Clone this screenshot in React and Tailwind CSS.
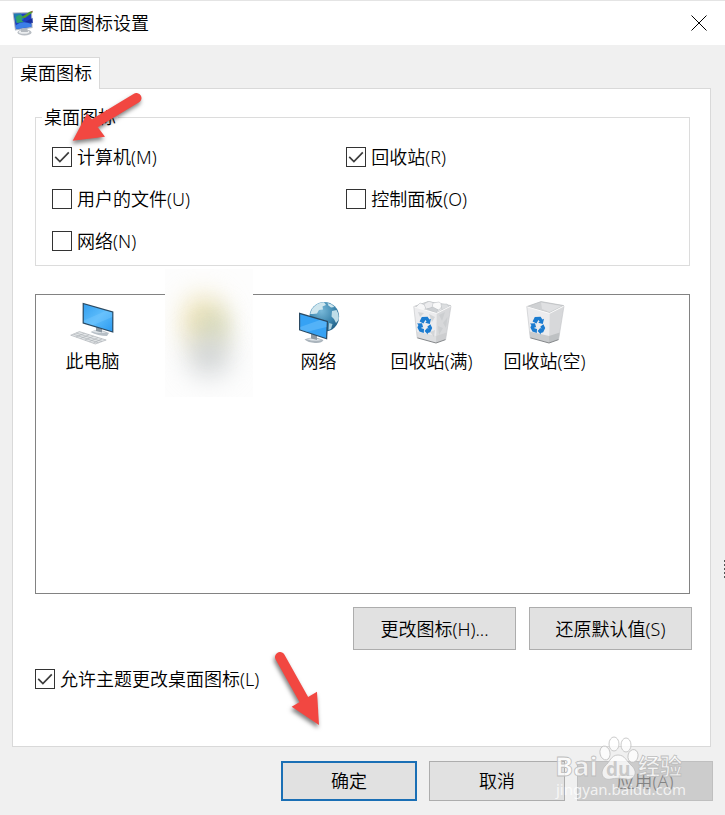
import React from 'react';
import clsx from 'clsx';

const FONT = "font-['Noto_Sans','Noto_Sans_CJK_SC',sans-serif]";

function ThemeIcon() {
  return (
    <svg className="w-[22px] h-[26px] shrink-0" viewBox="0 0 22 26" aria-hidden="true">
      <ellipse cx="12.5" cy="22.4" rx="7" ry="3" fill="#b9bec4" />
      <ellipse cx="12" cy="22" rx="5.4" ry="1.8" fill="#eceef0" />
      <path d="M9 18 L15 17 L16 22 L9 22 Z" fill="#b4b9bf" />
      <path d="M0.6 2.6 L20 2 L20.6 18 L3 20.6 Z" fill="#a9b4c4" />
      <path d="M1.8 3.8 L19 3.2 L19.4 16.8 L4 19 Z" fill="#1d3fc0" />
      <path d="M1.8 3.8 L9 3.5 L12 9 L4 13 Z" fill="#1f7fb0" />
      <path d="M4 7 Q8 3 11 7 Q8 10 12 12 L5 13 Z" fill="#2fa36b" />
      <path d="M3.6 15.5 Q10 10 19.4 14 L19.4 16.8 L4 19 Z" fill="#3c7fe8" />
      <path d="M13 12 L20.5 8 L20.8 13 Z" fill="#1a2f9c" />
      <path d="M9 7.5 L18 1.6 L20.5 2.4 L13 8 Z" fill="#4f9d2c" />
      <path d="M18 1.6 L20.8 0.8 L20.5 2.8 Z" fill="#8a6a3c" />
    </svg>
  );
}

function ComputerIcon() {
  return (
    <svg className="w-12 h-11" viewBox="0 0 48 44" aria-hidden="true">
      <defs>
        <linearGradient id="pc-screen" x1="0" y1="0" x2="1" y2="1">
          <stop offset="0" stopColor="#35a0f0" />
          <stop offset="0.5" stopColor="#5cbcfb" />
          <stop offset="1" stopColor="#2c9bf2" />
        </linearGradient>
      </defs>
      <path d="M21.5 31 Q29 26.5 40 32 L38 35 Q29 35 21.5 31 Z" fill="#b7bfc6" />
      <path d="M23 30.5 Q29 28 37 31.5 Q30 33 23 30.5 Z" fill="#dfe4e8" />
      <path d="M27 26 L33 28 L33 31.5 L27 30 Z" fill="#8f9aa3" />
      <path d="M13.6 1.7 L44.4 10.6 L44.4 31.8 L13.6 22.4 Z" fill="#2b4a63" />
      <path d="M14.8 3.3 L43.2 11.5 L43.2 30.2 L14.8 21.5 Z" fill="url(#pc-screen)" />
      <path d="M14.8 19.5 L37 9.7 L43.2 11.5 L43.2 16 L24 24.3 L14.8 21.5 Z" fill="#7fcbff" opacity="0.35" />
      <path d="M1.7 34.2 L10.4 30.6 L37.2 39 L26.4 43 Z" fill="#e2e5e7" stroke="#a6abb0" strokeWidth="0.6" />
      <path d="M4.5 33.2 L29.5 41.8 M7.2 32 L33 40.5 M7 36 L15.5 32.3 M11.5 37.5 L20 33.8 M16 39 L24.5 35.2 M20.5 40.6 L29 36.6 M24.5 41.9 L33 37.9" stroke="#a9aeb3" strokeWidth="0.6" />
    </svg>
  );
}

function NetworkIcon() {
  return (
    <svg className="w-12 h-11" viewBox="0 0 48 44" aria-hidden="true">
      <defs>
        <radialGradient id="net-globe" cx="0.4" cy="0.3" r="0.75">
          <stop offset="0" stopColor="#79b9d9" />
          <stop offset="0.6" stopColor="#3d86ae" />
          <stop offset="1" stopColor="#1f5c83" />
        </radialGradient>
      </defs>
      <circle cx="29.3" cy="15.7" r="14.8" fill="url(#net-globe)" />
      <path d="M17 8 Q22 1.5 29 1.2 L31 4 L27.5 5.5 L28 8.5 L24 9 L22 12.5 L18 13 L15.2 13 Z" fill="#cfe6ee" />
      <path d="M32.5 2 Q37 3 39.5 6 L36 6.5 L33.5 4.5 Z" fill="#cfe6ee" />
      <path d="M37 10 L41.5 9 Q44.5 14 43.5 19 L41 22 L39 18 L36.5 15.5 Z" fill="#bfdde8" />
      <path d="M34 22 L37.5 23 L36 28 L33.5 29 Z" fill="#a8cfdf" />
      <path d="M9.5 38.5 Q18 34.5 28.5 39 Q27 42.4 20 42 Q13 41.5 9.5 38.5 Z" fill="#aab4bc" />
      <path d="M11 37.9 Q18 36 27 39 Q20 41 11 37.9 Z" fill="#dfe5e9" />
      <path d="M16 32 L22 34 L22 39 L16 37.5 Z" fill="#8f9aa3" />
      <path d="M4 11.5 L33 20 L32.2 38.6 L4 29.3 Z" fill="#2b4a63" />
      <path d="M5.2 13.2 L31.7 21 L31 37 L5.2 28.4 Z" fill="#36a2f4" />
      <path d="M5.2 26 L25 19 L31.7 21 L31.5 26 L12 30.7 L5.2 28.4 Z" fill="#7fcbff" opacity="0.4" />
    </svg>
  );
}

function RecycleMark() {
  return (
    <g fill="#1c7cd0">
      <path d="M11.6 20.6 L13.8 16 L19.6 15.8 L21.4 18.4 L23 17.8 L21.8 23 L17.2 21.8 L18.6 20.4 L17.4 19 L15.4 22.6 Z" />
      <path d="M9 22.4 L14 22.2 L15.2 26.4 L13.8 26 L13.4 27.2 L16 28 L15.8 32 L11.4 30.6 L9.4 26.6 L10.4 24 Z" />
      <path d="M16.6 30 L19.6 26.4 L19.8 27.8 L20.4 27.8 L19.4 25.4 L22.4 23.2 L24.2 27 L22.2 31.2 L19.8 32 L19.8 33.4 Z" />
    </g>
  );
}

function BinIcon({ full }) {
  return (
    <svg className="w-12 h-11" viewBox="0 0 48 44" aria-hidden="true">
      <path d="M5.8 5.6 L20 0.6 L43 4.6 L28.5 12 Z" fill={full ? '#e3e4e6' : '#cfd1d3'} stroke="#b8babd" strokeWidth="0.7" />
      {full ? (
        <g stroke="#b9bcc0" strokeWidth="0.5">
          <path d="M8 6 L12 2 L17 4 L18 8 L12 9 Z" fill="#f7f7f8" />
          <path d="M16 3 L21 0.3 L26 2 L24 7 L18 8 Z" fill="#ececee" />
          <path d="M25 2 L31 1 L35 4 L31 9 L24 7 Z" fill="#fafafa" />
          <path d="M33 3 L39 3 L41 6 L34 9 Z" fill="#dcdee0" />
          <path d="M19 8 L25 6 L30 9 L28 12 Z" fill="#cdd0d3" />
        </g>
      ) : (
        <path d="M20 1.5 L21 8 L28.5 11 L40.5 5 Z" fill="#dfe0e2" />
      )}
      <path d="M5.8 5.8 L28.5 12.4 L28 42 L9.2 36.8 Z" fill="#ececee" />
      <path d="M28.5 12.4 L43 5 L37.6 38.6 L28 42 Z" fill="#d7d8da" />
      {full && (
        <g fill="#c5c8cb" opacity="0.6">
          <path d="M31 14 L37 11 L34 20 Z" />
          <path d="M35 22 L39.5 16 L38 27 Z" />
          <path d="M30 25 L35 27 L31 34 Z" />
          <path d="M10 11 L16 12 L12 16 Z" />
          <path d="M21 13 L27 16 L24 21 Z" />
          <path d="M22 31 L27 29 L26 36 Z" />
        </g>
      )}
      <path
        d="M8.6 30.5 L28.1 35 L38.8 31.6 L37.6 38.6 L28 42 L9.2 36.8 Z"
        fill="#a6a9ac"
        opacity={full ? 0.2 : 0.5}
      />
      <path d="M9.2 36.8 L28 42 L37.6 38.6" fill="none" stroke="#85888b" strokeWidth="1" />
      <path d="M5.8 5.8 L28.5 12.4 L43 5" fill="none" stroke="#fafafa" strokeWidth="1" />
      <path d="M5.8 5.8 L9.2 36.8 M43 5 L37.6 38.6" fill="none" stroke="#c3c5c8" strokeWidth="0.6" />
      <RecycleMark />
    </svg>
  );
}

function CheckField({ id, label, checked }) {
  return (
    <div className="flex items-center h-6 gap-[5px]">
      <span className="grid shrink-0">
        <input
          id={id}
          type="checkbox"
          defaultChecked={checked}
          className="peer col-start-1 row-start-1 appearance-none w-5 h-5 border border-[#333] bg-white"
        />
        <svg
          className="col-start-1 row-start-1 w-5 h-5 pointer-events-none invisible peer-checked:visible"
          viewBox="0 0 20 20"
          aria-hidden="true"
        >
          <path d="M3.2 9.8 L7.9 14.5 L16.8 5.4" fill="none" stroke="#3c3c3c" strokeWidth="1.7" />
        </svg>
      </span>
      <label htmlFor={id} className="whitespace-nowrap">{label}</label>
    </div>
  );
}

function IconItem({ label, children }) {
  return (
    <li className="w-[113px] flex flex-col items-center gap-1">
      {children}
      <span className="whitespace-nowrap">{label}</span>
    </li>
  );
}

function PushButton({ children, className, ...rest }) {
  return (
    <button
      type="button"
      className={clsx('flex items-center justify-center whitespace-nowrap', className)}
      {...rest}
    >
      {children}
    </button>
  );
}

function Arrow({ className, viewBox, shaft, head }) {
  return (
    <svg className={clsx('absolute pointer-events-none overflow-visible drop-shadow-[-1px_3px_2px_rgba(0,0,0,0.5)]', className)} viewBox={viewBox} aria-hidden="true">
      <path d={shaft} stroke="#f24741" strokeWidth="10" strokeLinecap="round" />
      <path d={head} fill="#f24741" />
    </svg>
  );
}

function Watermark() {
  return (
    <svg
      className="absolute right-[35px] bottom-3 w-[136px] h-[68px] pointer-events-none"
      viewBox="0 0 136 68"
      fill="#fff"
      fillOpacity="0.75"
      stroke="#bdbdbd"
      strokeWidth="0.8"
    >
      <ellipse cx="51" cy="18" rx="5" ry="7" transform="rotate(-12 51 18)" />
      <ellipse cx="60" cy="9" rx="5" ry="7" />
      <ellipse cx="72" cy="10" rx="5" ry="7" />
      <ellipse cx="79" cy="21" rx="5" ry="6.5" transform="rotate(12 79 21)" />
      <path d="M64 20 C71 20 72 26 78 31 C85 38 79 46 72 44 C66 43 62 43 57 44 C49 46 45 38 51 31 C56 27 57 20 64 20 Z" />
      <text x="1" y="41" fontSize="27" fontWeight="700" fontFamily="Open Sans, sans-serif">Bai</text>
      <text x="52" y="41" fontSize="19" fontWeight="700" fill="#bcbcbc" stroke="none" fontFamily="Open Sans, sans-serif">du</text>
      <text x="84" y="39" fontSize="22" fontWeight="700" fontFamily="Noto Sans CJK SC, sans-serif">经验</text>
      <text x="2" y="60" fontSize="15" fontWeight="400" stroke="none" fontFamily="Noto Sans, sans-serif">jingyan.baidu.com</text>
    </svg>
  );
}

export default function App() {
  return (
    <div className={clsx('relative min-h-screen flex flex-col bg-[#f0f0f0] border-t border-[#e4e4e4] text-black text-[18px] leading-6 font-[350]', FONT)}>
      <header className="flex items-center h-11 pl-3 pr-4 bg-white">
        <ThemeIcon />
        <h1 className="ml-[7px] flex-1 font-[350]">桌面图标设置</h1>
        <button type="button" aria-label="关闭" className="w-5 h-5 flex items-center justify-center">
          <svg className="w-4 h-4" viewBox="0 0 16 16" aria-hidden="true">
            <path d="M0.5 0.5 L15.5 15.5 M15.5 0.5 L0.5 15.5" stroke="#000" strokeWidth="1" />
          </svg>
        </button>
      </header>

      <main className="flex-1 flex flex-col pt-3 pl-3 pr-3.5">
        <div role="tablist" className="flex">
          <button
            type="button"
            role="tab"
            aria-selected="true"
            className="relative z-10 h-8 -mb-px px-[7px] pb-0.5 bg-white border border-b-0 border-[#d9d9d9]"
          >
            桌面图标
          </button>
        </div>

        <section className="flex-1 flex flex-col bg-white border border-[#d9d9d9] pt-4 pl-[22px] pr-[18px] pb-[55px]">
          <fieldset className="mr-0.5 px-1.5 border border-[#dcdcdc]">
            <legend className="px-0.5">桌面图标</legend>
            <div className="grid grid-cols-[9fr_10fr] gap-y-[18px] px-2.5 pt-4 pb-3">
              <CheckField id="computer" label="计算机(M)" checked />
              <CheckField id="recycle" label="回收站(R)" checked />
              <CheckField id="user-files" label="用户的文件(U)" />
              <CheckField id="control-panel" label="控制面板(O)" />
              <CheckField id="network" label="网络(N)" />
            </div>
          </fieldset>

          <ul className="flex-1 flex mr-0.5 mt-7 pt-1.5 border border-[#828282]">
            <IconItem label="此电脑">
              <ComputerIcon />
            </IconItem>
            {/* blurred-out user folder */}
            <li className="relative w-[113px]" aria-hidden="true">
              <div className="absolute -top-8 left-4 w-[88px] h-32 bg-[#fdfdfd] overflow-hidden">
                <div className="absolute top-7 left-5 w-9 h-12 rounded-full bg-[#eee0ac] blur-[14px]" />
                <div className="absolute top-10 left-9 w-6 h-9 rounded-full bg-[#cfd6b8] blur-[12px]" />
                <div className="absolute top-[66px] left-6 w-10 h-10 rounded-full bg-[#cbcfd1] blur-[14px]" />
              </div>
            </li>
            <IconItem label="网络">
              <NetworkIcon />
            </IconItem>
            <IconItem label="回收站(满)">
              <BinIcon full />
            </IconItem>
            <IconItem label="回收站(空)">
              <BinIcon />
            </IconItem>
          </ul>

          <div className="flex justify-end gap-[13px] mt-[13px]">
            <PushButton className="w-[163px] h-[43px] bg-[#e1e1e1] border border-[#adadad]">更改图标(H)...</PushButton>
            <PushButton className="w-[163px] h-[43px] bg-[#e1e1e1] border border-[#adadad]">还原默认值(S)</PushButton>
          </div>

          <div className="mt-[17px]">
            <CheckField id="allow-themes" label="允许主题更改桌面图标(L)" checked />
          </div>
        </section>
      </main>

      <footer className="flex justify-end gap-3 pt-3.5 pb-3.5 pr-3">
        <PushButton className="w-[136px] h-10 bg-[#e1e1e1] border-2 border-[#1a6fb5]">确定</PushButton>
        <PushButton className="w-[136px] h-10 bg-[#e1e1e1] border border-[#adadad]">取消</PushButton>
        <PushButton disabled className="w-[136px] h-10 bg-[#cccccc] border border-[#bfbfbf] text-[#838383]">应用(A)</PushButton>
      </footer>

      <Arrow
        className="left-[72px] top-[92px] w-[72px] h-[52px]"
        viewBox="72 93 72 52"
        shaft="M136.5 98 L96 122.5"
        head="M72.7 140.7 L87.3 113.3 L105 136.7 Z"
      />
      <Arrow
        className="left-[274px] bottom-[85px] w-[50px] h-20"
        viewBox="274 650 50 80"
        shaft="M280 657 L303.5 699"
        head="M319 725 L291.7 706.7 L317 691.7 Z"
      />
      <svg className="absolute right-0 bottom-[236px] w-0.5 h-5" viewBox="0 0 2 20" aria-hidden="true">
        <path d="M1.5 1 V20" stroke="#555" strokeWidth="1" strokeDasharray="2 2" />
      </svg>
      <Watermark />
    </div>
  );
}
